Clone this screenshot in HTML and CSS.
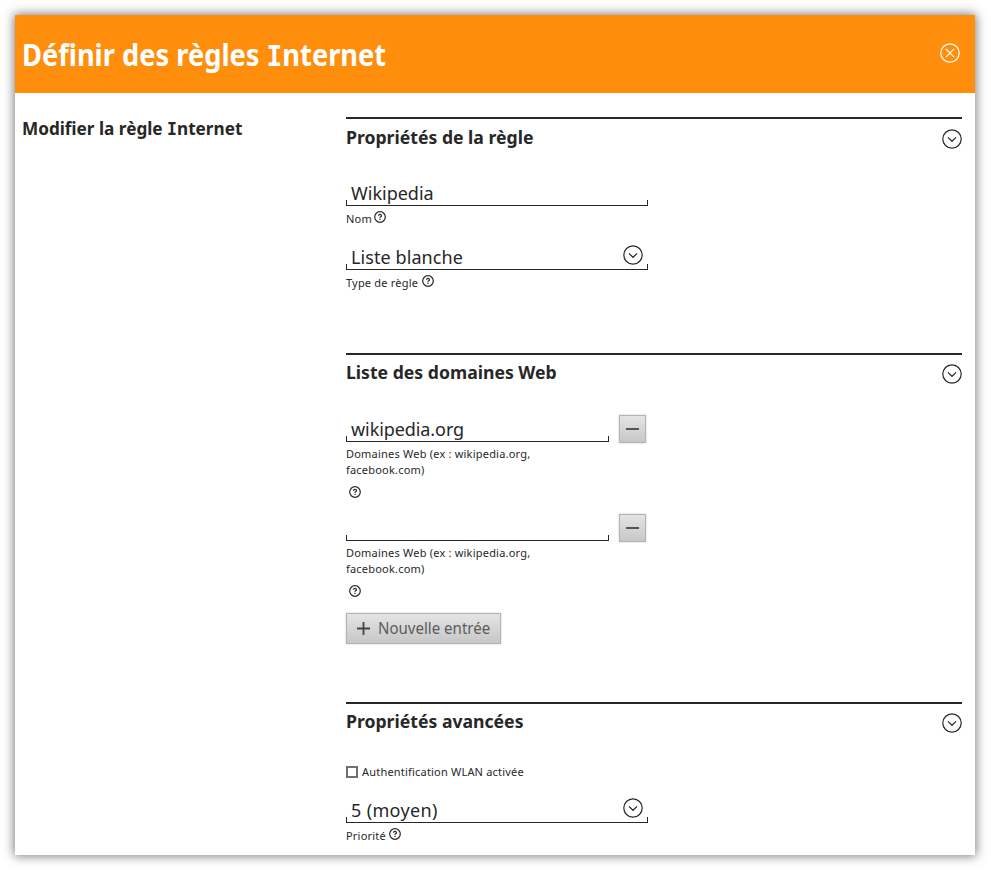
FILE: index.html
```html
<!DOCTYPE html>
<html lang="fr">
<head>
<meta charset="utf-8">
<title>Définir des règles Internet</title>
<link rel="stylesheet" href="styles.css">
</head>
<body>
<svg class="defs" aria-hidden="true">
  <symbol id="chevron" viewBox="0 0 20 20"><circle cx="10" cy="10" r="9.2"/><path d="M6 8.4l4 3.9 4-3.9"/></symbol>
  <symbol id="close" viewBox="0 0 20 20"><circle cx="10" cy="10" r="9.2"/><path d="M5.9 5.9l8.2 8.2M14.1 5.9l-8.2 8.2"/></symbol>
  <symbol id="help" viewBox="0 0 12 12"><circle cx="6" cy="6" r="5.3"/><path d="M4.5 4.8Q4.6 3.4 6 3.4T7.5 4.7Q7.5 5.4 6.7 5.8T6 6.9M6 7.8v1.1"/></symbol>
</svg>
<main class="dialog">
  <header class="dialog-header">
    <h1 class="title">Définir des règles <span class="cap-i">I</span>nternet</h1>
    <svg class="icon"><use href="#close"/></svg>
  </header>
  <div class="dialog-body">
    <h2 class="subtitle">Modifier la règle <span class="cap-i">I</span>nternet</h2>
    <div class="sections">
      <section class="section section-rule">
        <div class="section-head"><h3 class="section-title">Propriétés de la règle</h3><svg class="icon"><use href="#chevron"/></svg></div>
        <div class="field"><div class="control"><span class="value">Wikipedia</span></div>
          <div class="label label-name"><span>Nom</span><svg class="help"><use href="#help"/></svg></div></div>
        <div class="field"><div class="control"><span class="value value-type">Liste blanche</span><svg class="icon"><use href="#chevron"/></svg></div>
          <div class="label label-type"><span>Type de règle</span><svg class="help"><use href="#help"/></svg></div></div>
      </section>
      <section class="section section-domains">
        <div class="section-head"><h3 class="section-title">Liste des domaines Web</h3><svg class="icon"><use href="#chevron"/></svg></div>
        <div class="entry"><div class="entry-row"><div class="control"><span class="value">wikipedia.org</span></div><button class="button remove" aria-label="Supprimer"><span class="minus"></span></button></div>
          <div class="hint">Domaines Web (ex : wikipedia.org,<br>facebook.com)</div><svg class="help"><use href="#help"/></svg></div>
        <div class="entry"><div class="entry-row"><div class="control"></div><button class="button remove" aria-label="Supprimer"><span class="minus"></span></button></div>
          <div class="hint">Domaines Web (ex : wikipedia.org,<br>facebook.com)</div><svg class="help"><use href="#help"/></svg></div>
        <button class="button add"><svg class="plus" viewBox="0 0 13 13"><path d="M6.5 0v13M0 6.5h13"/></svg><span class="add-text">Nouvelle entrée</span></button>
      </section>
      <section class="section section-advanced">
        <div class="section-head"><h3 class="section-title">Propriétés avancées</h3><svg class="icon"><use href="#chevron"/></svg></div>
        <label class="check"><span class="box"></span><span>Authentification WLAN activée</span></label>
        <div class="field"><div class="control"><span class="value value-priority">5 (moyen)</span><svg class="icon"><use href="#chevron"/></svg></div>
          <div class="label"><span>Priorité</span><svg class="help"><use href="#help"/></svg></div></div>
      </section>
    </div>
  </div>
</main>
</body>
</html>
```
FILE: styles.css
```css
* { box-sizing: border-box; }
body { margin: 0; padding: 15px 16px 15px 15px; height: 870px; overflow: hidden; background: #fff; color: #272727; font-family: "Noto Sans", sans-serif; }
h1, h2, h3 { margin: 0; font-weight: 700; white-space: nowrap; }
svg { display: block; flex: none; fill: none; stroke: currentColor; }
.defs { position: absolute; width: 0; height: 0; }
.dialog { height: 840px; background: #fff; box-shadow: 0 0 10px 1px rgba(0,0,0,.52); }
.dialog-header { display: flex; justify-content: space-between; height: 78px; padding: 28px 15px 0 7px; background: #ff8e0d; color: #fff; }
.title { font-size: 29.5px; line-height: 40px; margin-top: -8px; transform: scaleX(.924); transform-origin: left; }
.cap-i { font-family: "DejaVu Sans Mono", monospace; font-size: .96em; }
.icon { width: 20px; height: 20px; stroke-width: 1.2; }
.dialog-body { display: flex; padding: 24px 13px 0 8px; }
.subtitle { width: 323px; font-size: 18px; line-height: 24px; height: 24px; margin: -1px 1px 0 -1px; transform: scaleX(.953); transform-origin: left; }
.sections { flex: 1; }
.section { border-top: 2px solid #272727; }
.section-rule { height: 236px; }
.section-domains { height: 349px; }
.section-head { display: flex; justify-content: space-between; height: 60px; padding-top: 10px; }
.section-title { font-size: 18px; line-height: 24px; margin-top: -5px; transform: scaleX(.979); transform-origin: left; }
.section-rule .section-title { margin-top: -4px; }
.section-domains .section-head { height: 59px; }
.section-domains .section-head .icon, .section-advanced .section-head .icon { margin-top: -1px; }
.field { width: 302px; height: 64px; }
.control { display: flex; justify-content: space-between; height: 27px; padding: 0 5px; background: linear-gradient(#272727,#272727) left bottom/1px 6px no-repeat, linear-gradient(#272727,#272727) right bottom/1px 6px no-repeat, linear-gradient(#272727,#272727) left bottom/100% 1px no-repeat; }
.control .icon { margin-top: 2px; }
.value { font-size: 18px; line-height: 24px; margin-top: 2px; white-space: nowrap; }
.value-type { letter-spacing: .08px; }
.value-priority { letter-spacing: .35px; }
.label { display: flex; padding-top: 5px; gap: 3px; font-size: 11px; line-height: 16px; letter-spacing: .2px; }
.label-name { gap: 2px; }
.label-type { gap: 4px; }
.help { width: 12px; height: 12px; stroke-width: 1.2; }
.entry { height: 99px; }
.entry-row { display: flex; gap: 10px; height: 31px; }
.entry-row .control { width: 263px; height: 28px; }
.entry-row .value { margin-top: 3px; letter-spacing: -.08px; }
.button { display: flex; align-items: center; padding: 0; border: 1px solid #b3b3b3; background: linear-gradient(#e4e4e4,#c7c7c7); box-shadow: 0 0 2px rgba(0,0,0,.2); color: #5c5c5c; font-family: inherit; }
.remove { width: 27px; height: 28px; margin-top: 1px; justify-content: center; }
.minus { width: 13px; height: 2px; background: #555; }
.hint { font-size: 11px; line-height: 16px; padding-top: 1px; white-space: nowrap; letter-spacing: .21px; }
.entry .help { margin: 8px 0 0 3px; }
.add { width: 155px; height: 31px; margin-top: 1px; padding-left: 10px; gap: 8px; font-size: 16px; white-space: nowrap; }
.add-text { transform: translateY(-1px) scaleX(.94); transform-origin: left; }
.plus { width: 13px; height: 13px; stroke: #444; stroke-width: 1.8; }
.check { display: flex; align-items: center; height: 16px; font-size: 11px; line-height: 16px; letter-spacing: .2px; }
.box { width: 12px; height: 12px; border: 2px solid #707070; margin-right: 4px; }
.section-advanced .field { margin-top: 16px; }
```
